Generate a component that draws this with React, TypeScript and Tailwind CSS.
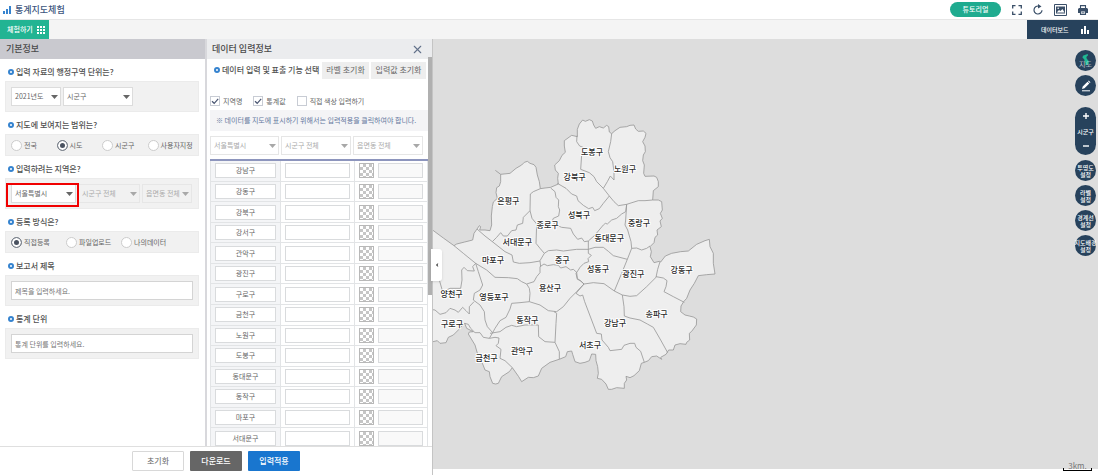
import * as React from "react";
import { ChevronDown, X } from "lucide-react";
import clsx from "clsx";

const DISTRICTS = [
  "강남구", "강동구", "강북구", "강서구", "관악구", "광진구", "구로구",
  "금천구", "노원구", "도봉구", "동대문구", "동작구", "마포구", "서대문구",
];

// Seoul outline and district borders, in map units (3 units = 1px)
const OUTLINE =
  "0,355 9,361 40,384 72,407 80,402 104,396 128,390 132,370 141,357 148,347 152,350 149,360 165,360 180,362 185,345 184,318 187,290 190,276 202,265 198,248 200,233 208,228 212,215 212,193 240,190 258,175 275,165 283,157 292,154 300,160 312,164 318,172 322,195 328,215 331,236 345,234 362,232 385,222 383,205 385,190 376,180 374,165 388,152 396,136 406,127 403,108 403,92 425,76 442,80 442,58 448,42 458,30 466,34 478,29 487,33 491,45 497,55 508,50 520,54 530,46 536,50 538,66 545,71 555,62 570,52 590,50 600,46 612,45 617,57 625,64 640,63 648,70 645,82 638,95 645,108 646,125 640,135 638,152 643,165 641,190 645,199 672,198 680,202 685,215 685,230 670,242 668,270 685,270 695,275 697,300 691,310 697,325 690,333 694,350 681,360 683,375 675,382 672,398 660,410 664,425 661,440 672,458 688,454 692,456 706,438 725,430 752,425 775,423 800,403 825,392 838,388 840,410 850,430 850,460 855,492 830,494 805,497 793,520 780,540 770,565 761,575 753,588 752,605 765,615 778,618 790,621 800,627 799,645 785,664 778,670 779,690 770,697 768,703 750,701 735,705 730,720 716,720 708,733 692,742 695,748 680,738 665,740 655,752 643,757 634,760 628,782 612,797 600,803 588,799 590,810 583,820 583,835 560,833 545,838 535,838 528,822 515,808 502,805 505,790 503,770 498,752 497,733 485,732 478,752 465,757 450,760 435,755 428,733 425,723 412,725 407,740 390,747 360,757 335,775 325,798 310,803 295,802 275,815 266,800 247,773 238,785 215,800 205,820 197,822 188,820 180,800 178,785 165,780 158,762 145,740 135,705 115,672 118,666 130,665 110,655 104,640 92,652 85,660 70,675 55,682 48,698 30,700 22,692 9,695 0,695";

const BORDERS = [
  "441,77 440,95 449,108 459,112 455,135 452,178 478,188 492,200 500,215 520,235",
  "545,71 542,95 535,125 540,143 548,155 552,185 552,210 541,198 532,215 520,235",
  "520,235 538,258 552,275 565,287 590,283 625,272 645,272 668,270",
  "382,220 408,235 425,252 440,258 444,272 460,286 476,296 488,292 494,302 508,296 520,280 538,258",
  "362,234 375,245 378,262 386,270 385,290 389,300 386,318 370,325 366,335 378,345 395,352 422,355 430,372 443,388 455,384 463,395 475,393",
  "475,393 494,376 520,345 526,340 532,342 545,330 560,325 575,312 587,305 590,283",
  "590,283 587,330 585,345 593,360 603,395 605,415",
  "605,415 620,414 635,420 650,415 660,408",
  "475,418 495,412 520,412 535,424 550,437 592,448",
  "605,415 592,448 575,490 553,543",
  "343,430 355,422 380,420 400,423 440,418 475,418",
  "475,393 475,430 484,436 474,446 476,455 462,460 450,472 445,480 438,490 442,508 452,512 462,522",
  "462,522 490,518 522,521 553,543 577,555 600,559 620,557 650,530 678,502 683,478 690,455",
  "678,500 700,504 711,512 708,530 702,545 730,560 763,577",
  "577,555 582,590 583,618 600,624 630,630 652,642 670,652 692,690 713,728",
  "330,470 342,462 352,467 370,464 385,466 392,474 408,470 422,480 430,478 440,487 442,505 462,522",
  "462,522 440,545 420,565 400,590 380,605 355,602 330,585 298,575",
  "330,470 330,488 320,500 312,515 290,522 298,535 300,550 298,575",
  "187,395 200,382 212,368 220,378 232,378 245,362 258,360 262,345 278,340 280,322 300,302",
  "331,236 310,245 301,252 300,302 306,325 320,342 318,400 330,415 343,430 330,452 332,470",
  "330,453 300,458 268,460 250,456 246,435 225,425 187,395 165,378 141,357",
  "72,407 100,430 137,460 170,480 195,502 235,503 262,506 275,515 290,522",
  "137,460 145,485 158,525 150,540 133,550 130,570 150,585 163,605 165,630 172,650 188,668",
  "137,460 128,470 133,483 112,482 102,472 95,480 96,510 92,535 60,535 38,545 28,510 0,500",
  "0,598 15,600 30,613 48,608 60,595 75,600 85,607 98,592 108,602 118,612 118,590 132,575",
  "298,575 270,578 245,580 240,597 228,622 210,632 195,655 188,668 178,685",
  "104,640 115,643 122,655 135,668 150,668 160,682 178,685 195,682 207,684 205,700 198,707 213,718 210,745 225,752 247,773",
  "180,670 210,665 228,652 245,646 260,650 285,645 325,645 326,680 345,695 375,697",
  "372,605 380,610 378,640 375,697 388,725 388,747",
  "462,522 438,550 450,558 458,555 464,575 500,670 514,672 516,690 535,712 540,722 575,718 582,706 600,700 614,700 618,712 632,724 643,757",
];

const LABELS: [string, number, number][] = [
  ["도봉구", 486, 126], ["노원구", 585, 176], ["강북구", 434, 202],
  ["은평구", 235, 272], ["종로구", 353, 346], ["성북구", 447, 314],
  ["중랑구", 627, 338], ["동대문구", 538, 385], ["서대문구", 262, 397],
  ["마포구", 189, 450], ["중구", 397, 450], ["성동구", 504, 478],
  ["광진구", 610, 491], ["강동구", 755, 479], ["용산구", 360, 535],
  ["양천구", 65, 553], ["영등포구", 192, 560], ["구로구", 66, 641],
  ["동작구", 292, 630], ["강남구", 555, 638], ["송파구", 680, 613],
  ["서초구", 480, 706], ["관악구", 276, 724], ["금천구", 170, 743],
];

function Select({ label, value, className, disabled }: { label: string; value: string; className?: string; disabled?: boolean }) {
  return (
    <div className={clsx("relative h-[19px]", className)}>
      <select
        aria-label={label}
        disabled={disabled}
        className={clsx(
          "block h-full w-full appearance-none border pl-[3px] text-[7px] opacity-100",
          disabled ? "border-[#e6e6e6] bg-transparent text-[#aaa]" : "border-[#dcdcdc] bg-white text-[#666]"
        )}
      >
        <option>{value}</option>
      </select>
      <svg
        viewBox="0 0 7 4"
        className={clsx("pointer-events-none absolute top-[8px] right-[3px] h-1 w-[7px]", disabled ? "fill-[#a8a8a8]" : "fill-[#666]")}
      >
        <path d="M0 0h7L3.5 4z" />
      </svg>
    </div>
  );
}

function SectionTitle({ children }: { children: React.ReactNode }) {
  return (
    <h3 className="flex items-center gap-[2px] text-[8px] font-medium text-[#505050]">
      <span className="h-[6px] w-[6px] rounded-full border-2 border-[#3583cf]" />
      {children}
    </h3>
  );
}

function Section({ title, children, tall }: { title: string; children: React.ReactNode; tall?: boolean }) {
  return (
    <section className="mr-[6px] ml-[5px]">
      <div className="flex h-[22px] items-center pt-1 pl-[3px]">
        <SectionTitle>{title}</SectionTitle>
      </div>
      <div className={clsx("relative flex items-center border border-[#ebebeb] bg-[#f1f1f1] px-[5px]", tall ? "h-[31px]" : "h-[22px]")}>
        {children}
      </div>
    </section>
  );
}

function Radio({ name, label, checked }: { name: string; label: string; checked?: boolean }) {
  return (
    <label className="flex items-center gap-[2px] text-[7px] whitespace-nowrap text-[#666]">
      <input
        type="radio"
        name={name}
        defaultChecked={checked}
        className="h-[11px] w-[11px] shrink-0 appearance-none rounded-full border border-[#ccc] bg-white checked:border-[#7b828c] checked:bg-[#4a5260] checked:shadow-[inset_0_0_0_2px_#fff]"
      />
      {label}
    </label>
  );
}

function Check({ label, checked }: { label: string; checked?: boolean }) {
  return (
    <label className="relative flex items-center gap-[3px] text-[7px] text-[#666]">
      <input type="checkbox" defaultChecked={checked} className="peer h-[10px] w-[10px] appearance-none border border-[#c8ccd4] bg-white" />
      <svg viewBox="0 0 10 10" className="pointer-events-none absolute left-0 hidden h-[10px] w-[10px] peer-checked:block">
        <path d="M2 5.2 4.2 7.3 8.2 2.8" fill="none" stroke="#4a5672" strokeWidth="1.2" />
      </svg>
      {label}
    </label>
  );
}

function BasicInfo() {
  return (
    <div className="w-[207px] shrink-0 border-r-2 border-[#d8d8dc]">
      <h2 className="flex h-5 items-center bg-[#c9c9cf] pl-[6px] text-[9px] font-medium text-[#4a4a4a]">기본정보</h2>
      <Section title="입력 자료의 행정구역 단위는?" tall>
        <Select label="연도" value="2021년도" className="w-[50px]" />
        <Select label="행정구역 단위" value="시군구" className="ml-[2px] w-[70px]" />
      </Section>
      <Section title="지도에 보여지는 범위는?">
        <div className="grid flex-1 grid-cols-4">
          <Radio name="range" label="전국" />
          <Radio name="range" label="시도" checked />
          <Radio name="range" label="시군구" />
          <Radio name="range" label="사용자지정" />
        </div>
      </Section>
      <Section title="입력하려는 지역은?" tall>
        <Select label="시도" value="서울특별시" className="w-[65px]" />
        <Select label="시군구" value="시군구 전체" className="ml-[2px] w-[62px]" disabled />
        <Select label="읍면동" value="읍면동 전체" className="ml-[2px] w-[50px]" disabled />
        <div className="pointer-events-none absolute top-1 left-0 h-6 w-[73px] border-2 border-[#f00000]" />
      </Section>
      <Section title="등록 방식은?">
        <div className="grid flex-1 grid-cols-[55px_55px_1fr]">
          <Radio name="method" label="직접등록" checked />
          <Radio name="method" label="파일업로드" />
          <Radio name="method" label="나의데이터" />
        </div>
      </Section>
      <Section title="보고서 제목" tall>
        <input aria-label="보고서 제목" placeholder="제목을 입력하세요." className="h-[19px] w-full border border-[#d4d4d4] bg-white px-[3px] text-[7px] placeholder:text-[#777]" />
      </Section>
      <Section title="통계 단위" tall>
        <input aria-label="통계 단위" placeholder="통계 단위를 입력하세요." className="h-[19px] w-full border border-[#d4d4d4] bg-white px-[3px] text-[7px] placeholder:text-[#777]" />
      </Section>
    </div>
  );
}

function DataInfo() {
  return (
    <div className="relative min-w-0 flex-1">
      <div className="flex h-5 items-center justify-between bg-[#ebecee] pr-2 pl-[5px]">
        <h2 className="text-[9px] font-medium text-[#4a4a4a]">데이터 입력정보</h2>
        <button aria-label="닫기"><X className="h-[13px] w-[13px] text-[#62718a]" strokeWidth={2} /></button>
      </div>
      <div className="pr-1 pl-[3px]">
        <div className="flex h-[22px] items-center gap-[2px] pr-[2px] pl-1">
          <SectionTitle>데이터 입력 및 표출 기능 선택</SectionTitle>
          <button className="ml-auto h-[17px] w-[47px] bg-[#eeeeee] text-[8px] text-[#666]">라벨 초기화</button>
          <button className="h-[17px] w-[55px] bg-[#eeeeee] text-[8px] text-[#666]">입력값 초기화</button>
        </div>
        <div className="mt-3 mb-[1px] flex h-4 items-center gap-[11px]">
          <Check label="지역명" checked />
          <Check label="통계값" checked />
          <Check label="직접 색상 입력하기" />
        </div>
        <p className="flex h-[21px] items-center bg-[#f4f4f6] pl-[6px] text-[7px] text-[#6478a0]">
          ※ 데이터를 지도에 표시하기 위해서는 입력적용을 클릭하여야 합니다.
        </p>
        <div className="mt-[5px] flex gap-[2px]">
          <Select label="시도 선택" value="서울특별시" className="w-[69px]" disabled />
          <Select label="시군구 선택" value="시군구 전체" className="w-[70px]" disabled />
          <Select label="읍면동 선택" value="읍면동 전체" className="w-[70px]" disabled />
        </div>
        <table className="mt-1 h-[290px] w-full table-fixed border-collapse border-t-2 border-[#8d95bd] text-[7px] text-[#666]">
          <colgroup>
            <col className="w-[70px]" />
            <col className="w-[74px]" />
            <col />
          </colgroup>
          <tbody>
            {DISTRICTS.map((name) => (
              <tr key={name} className="border-b border-[#e2e4e6]">
                <td className="border-x border-[#e2e4e6] bg-[#f4f5f7] px-1 py-0">
                  <div className="h-[15px] border border-[#d9dbdd] bg-white text-center leading-[13px]">{name}</div>
                </td>
                <td className="border-r border-[#e2e4e6] px-1 py-0">
                  <input aria-label={`${name} 통계값`} className="block h-[15px] w-full border border-[#d9dbdd] bg-white px-1" />
                </td>
                <td className="border-r border-[#e2e4e6] px-1 py-0">
                  <div className="flex gap-1">
                    <button
                      aria-label={`${name} 색상`}
                      className="h-[15px] w-[15px] shrink-0 border border-[#b8b8b8] bg-[repeating-conic-gradient(#c6c6c6_0_25%,#fff_0_50%)] bg-[length:6px_6px]"
                    />
                    <input aria-label={`${name} 색상값`} disabled className="block h-[15px] min-w-0 flex-1 border border-[#d9dbdd] bg-[#f9f9f9]" />
                  </div>
                </td>
              </tr>
            ))}
          </tbody>
        </table>
      </div>
      {/* scroll thumb */}
      <div className="absolute top-[18px] right-0 h-[238px] w-1 bg-[#b0b0b0]" />
    </div>
  );
}

function SeoulMap() {
  return (
    <svg viewBox="9 -213 870 1290" className="absolute top-0 left-0 h-[430px] w-[290px]">
      <polygon points={OUTLINE} fill="#eeeeee" stroke="#999" strokeWidth="2.5" strokeLinejoin="round" />
      <path d="M212 193 196 181" stroke="#999" strokeWidth="2.5" />
      {BORDERS.map((points) => (
        <polyline key={points} points={points} fill="none" stroke="#999" strokeWidth="2.5" strokeLinejoin="round" />
      ))}
      {LABELS.map(([name, x, y]) => (
        <text
          key={name}
          x={x}
          y={y + 9}
          textAnchor="middle"
          fontSize="24"
          fontWeight="500"
          fill="#2a2a2a"
          stroke="#fff"
          strokeWidth="6"
          strokeLinejoin="round"
          paintOrder="stroke"
        >
          {name}
        </text>
      ))}
    </svg>
  );
}

const ROUND = "flex h-[21px] w-[21px] shrink-0 flex-col items-center justify-center rounded-full bg-[#27425c] text-[6px] leading-[7px] font-medium whitespace-nowrap text-white";

function MapTools() {
  return (
    <div className="absolute top-[11px] right-[2px] flex flex-col items-center gap-1">
      <button className={ROUND}>
        <svg viewBox="0 0 10 14" className="h-3 w-[9px]" fill="#1fb893">
          <path d="M2 2 5 1 7.500 0 8 1.500 6 3.500 6.500 5.500 8.500 8 9 11 7 12.500 4.500 13.500 5 11 4 8.500 3.500 6 1.500 4.500z" />
        </svg>
        <span className="-mt-[5px] text-[7px] font-light">지도</span>
      </button>
      <button aria-label="그리기" className={ROUND}>
        <svg viewBox="0 0 12 12" className="h-3 w-3" fill="#fff">
          <path d="M2 9 2.700 6.500 7.500 1.700 9.300 3.500 4.500 8.300zM8 1.200 8.700.5 10.500 2.300 9.800 3z" />
          <path d="M2 10.300h8v1H2z" />
        </svg>
      </button>
      <div className="mt-[7px] mb-[1px] flex h-12 w-[21px] flex-col items-center justify-between rounded-full bg-[#27425c] py-[6px] text-white">
        <button aria-label="확대">
          <svg viewBox="0 0 6 6" className="h-[6px] w-[6px]"><path d="M3 0v6M0 3h6" stroke="#fff" strokeWidth="1.4" /></svg>
        </button>
        <span className="text-[6px] leading-[7px] font-medium">시군구</span>
        <button aria-label="축소">
          <svg viewBox="0 0 6 6" className="h-[6px] w-[6px]"><path d="M0 3h6" stroke="#fff" strokeWidth="1.4" /></svg>
        </button>
      </div>
      {["투명도", "라벨", "경계선", "지도배경"].map((name) => (
        <button key={name} className={ROUND}>
          <span>{name}</span>
          <span>설정</span>
        </button>
      ))}
    </div>
  );
}

export default function App() {
  return (
    <div className="flex h-screen flex-col overflow-hidden bg-white font-['Noto_Sans_CJK_KR',sans-serif]">
      <header className="flex h-[19px] shrink-0 items-center justify-between pr-[10px] pl-[3px]">
        <div className="flex items-center gap-1">
          <svg viewBox="0 0 8 8" className="h-2 w-2" fill="#3583cf">
            <path d="M0 5h2v3H0zM3 3h2v5H3zM6 0h2v8H6z" />
          </svg>
          <h1 className="text-[9px] font-medium text-[#3d5680]">통계지도체험</h1>
        </div>
        <div className="flex items-center gap-[11px] text-[#3a4f68]">
          <button className="h-[15px] w-[51px] rounded-full bg-[#1fab8f] text-[7px] font-medium text-white">튜토리얼</button>
          <button aria-label="전체화면">
            <svg viewBox="0 0 10 10" className="h-[10px] w-[10px]" fill="none" stroke="currentColor" strokeWidth="1.3">
              <path d="M.7 3.500V.7h2.800M6.500.7h2.800v2.800M9.300 6.500v2.800H6.500M3.500 9.300H.7V6.500" />
            </svg>
          </button>
          <button aria-label="새로고침">
            <svg viewBox="0 0 10 11" className="h-[11px] w-[10px]">
              <path d="M6.200 2.200A4 4 0 1 0 9 6.200" fill="none" stroke="currentColor" strokeWidth="1.2" />
              <path d="M5 0 8.500 2.400 5 4.600z" fill="currentColor" />
            </svg>
          </button>
          <button aria-label="이미지 저장">
            <svg viewBox="0 0 13 12" className="h-3 w-[13px]">
              <path d="M.5.5h12v11H.5z" fill="#fff" stroke="currentColor" />
              <path d="M2 2.500h9v7H2z" fill="currentColor" />
              <path d="M2.700 8.500 5 6l1.500 1L8.500 5l2 3.500z" fill="#fff" />
              <circle cx="4.200" cy="4.300" r=".8" fill="#fff" />
            </svg>
          </button>
          <button aria-label="인쇄">
            <svg viewBox="0 0 10 10" className="h-[10px] w-[10px]">
              <path d="M2.500 3V.6h5V3" fill="#fff" stroke="currentColor" strokeWidth="1.1" />
              <path d="M1 3h8l1 1v4H0V4z" fill="currentColor" />
              <path d="M2.500 6h5v3.400h-5z" fill="#fff" stroke="currentColor" strokeWidth="1.1" />
              <path d="M3.600 7.700h2.800" stroke="currentColor" strokeWidth=".8" />
            </svg>
          </button>
        </div>
      </header>

      <nav className="flex h-5 shrink-0 justify-between border-t border-[#e6e6e6] bg-[#f4f4f4]">
        <button className="flex w-[49px] items-center justify-between bg-[#22b493] pr-1 pl-[7px] text-[7px] font-medium text-white">
          체험하기
          <svg viewBox="0 0 8 8" className="h-2 w-2" fill="#fff">
            <path d="M0 0h2v2H0zM3 0h2v2H3zM6 0h2v2H6zM0 3h2v2H0zM3 3h2v2H3zM6 3h2v2H6zM0 6h2v2H0zM3 6h2v2H3zM6 6h2v2H6z" />
          </svg>
        </button>
        <button className="flex w-[71px] items-center justify-between bg-[#27425c] pr-[9px] pl-[14px] text-[6px] font-medium text-white">
          데이터보드
          <svg viewBox="0 0 8 8" className="h-2 w-2" fill="#fff">
            <path d="M0 3h2v5H0zM3 0h2v8H3zM6 4h2v4H6z" />
          </svg>
        </button>
      </nav>

      <main className="flex min-h-0 flex-1">
        <div className="flex w-[433px] shrink-0 flex-col border-r border-[#c4c4c4]">
          <div className="flex min-h-0 flex-1 overflow-hidden">
            <BasicInfo />
            <DataInfo />
          </div>
          <div className="flex h-[29px] shrink-0 items-center justify-center gap-[6px] border-t border-[#dfdfdf] text-[8px] font-medium">
            <button className="h-5 w-[52px] rounded-[1px] border border-[#d8d8d8] font-normal text-[#666]">초기화</button>
            <button className="h-5 w-[52px] rounded-[1px] bg-[#666] text-white">다운로드</button>
            <button className="h-5 w-[52px] rounded-[1px] bg-[#1976cf] text-white">입력적용</button>
          </div>
        </div>
        <div className="relative mb-[6px] min-w-0 flex-1 bg-[#dddddd]">
          <SeoulMap />
          <button aria-label="패널 접기" className="absolute top-[210px] left-[-2px] flex h-8 w-[11px] items-center justify-center rounded-r-[3px] bg-white shadow">
            <ChevronDown className="h-[6px] w-[6px] rotate-90 fill-[#333] text-[#333]" />
          </button>
          <MapTools />
          <div className="absolute right-[6px] bottom-[-2px] w-[29px] text-center text-[8px] leading-[9px] text-[#777]">
            3km.
            <div className="-mt-[2px] h-[3px] border-x border-b border-black" />
          </div>
        </div>
      </main>
    </div>
  );
}
